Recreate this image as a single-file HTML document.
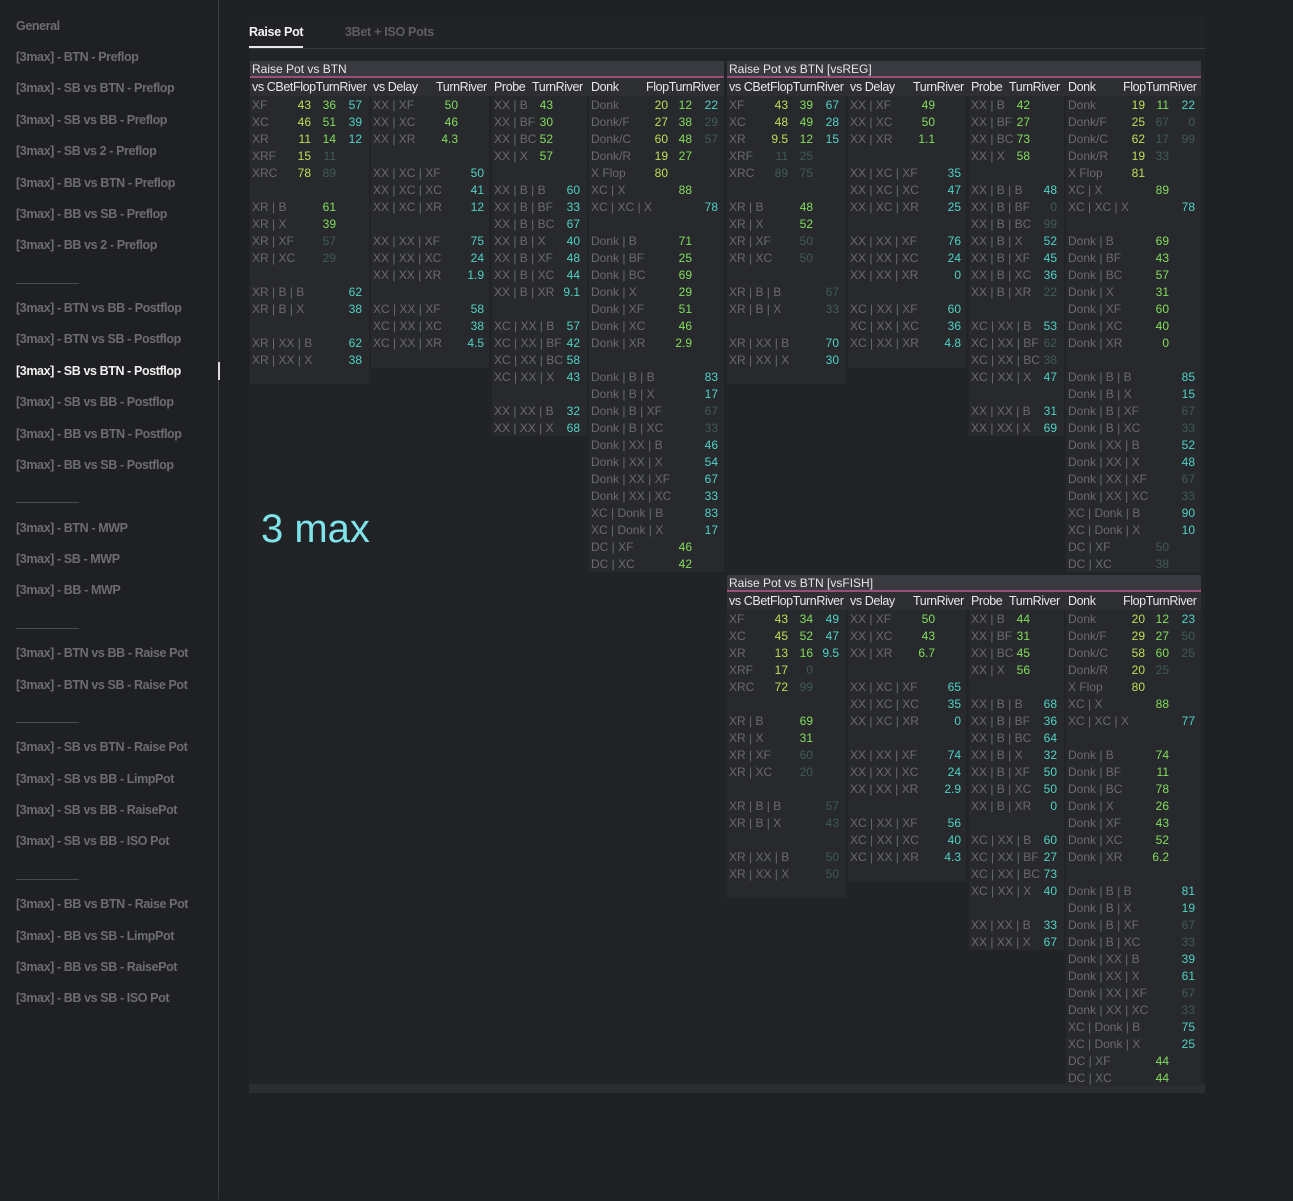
<!DOCTYPE html>
<html><head><meta charset="utf-8"><style>
*{box-sizing:border-box}
body{margin:0;width:1293px;height:1199px;background:#1f2023;font-family:"Liberation Sans",sans-serif;overflow:hidden;position:relative}
.side{position:absolute;left:0;top:2px;width:219px;height:1199px}
.sl{position:absolute;left:218px;top:0;width:1px;height:1199px;background:#3a3b3e}
.side div{position:absolute;left:16px;font-size:12.5px;font-weight:bold;color:#6c6d71;white-space:nowrap;letter-spacing:-0.4px}
.side .act{color:#f0f0f0}
.side .sep{width:63px;height:1px;background:#4a4b4e}
.bar{position:absolute;left:218px;top:362px;width:2px;height:18px;background:#ddd}
.panel{position:absolute;left:249px;top:15px;width:956px;height:1078px;background:#222326}
.tab1{position:absolute;left:249px;top:25px;font-size:12.5px;font-weight:bold;color:#f2f2f2;letter-spacing:-0.3px}
.tab2{position:absolute;left:345px;top:25px;font-size:12.5px;font-weight:bold;color:#5d5e62;letter-spacing:-0.3px}
.tl{position:absolute;left:249px;top:48px;width:956px;height:1px;background:#3a3b3f}
.ul{position:absolute;left:249px;top:46px;width:54px;height:2px;background:#e8e8e8}
.sb{position:absolute;left:249px;top:1084px;width:956px;height:9px;background:#2c2d30}
.ttl{position:absolute;height:17px;background:#3a3b40;border-bottom:2px solid #9a4f78;color:#e6e6e6;font-size:12px;line-height:16px;padding-left:2px}
.hd{position:absolute;height:18px;background:#2e2f33;color:#e8e8e8;font-size:12.5px;line-height:19px;white-space:nowrap;letter-spacing:-0.4px}
.hd span{position:absolute;top:0}
.g{position:absolute;background:#28292d}
.g p{height:17px;margin:0;position:relative;line-height:19px;font-size:12px;white-space:nowrap}
.g i{font-style:normal;color:#6a6b70;position:absolute;left:2px}
.g b{font-weight:normal;position:absolute;top:0}
.f{color:#c3dd58}.t{color:#82dd5c}.v{color:#4fd3c6}
b.d{color:#3e5c52}
.A{width:119px}.A .f{right:58px}.A .t{right:33px}.A .v{right:7px}
.B{width:118px}.B .t{right:31px}.B .v{right:5px}
.C{width:95px}.C .t{right:34px}.C .v{right:7px}
.D{width:135px}.D .f{right:56px}.D .t{right:32px}.D .v{right:6px}
.big{position:absolute;left:261px;top:507px;font-size:40px;color:#7fe3ea}
</style></head><body>
<div class="sl"></div>
<div class="side">
<div style="top:17px">General</div>
<div style="top:48px">[3max] - BTN - Preflop</div>
<div style="top:79px">[3max] - SB vs BTN - Preflop</div>
<div style="top:111px">[3max] - SB vs BB - Preflop</div>
<div style="top:142px">[3max] - SB vs 2 - Preflop</div>
<div style="top:174px">[3max] - BB vs BTN - Preflop</div>
<div style="top:205px">[3max] - BB vs SB - Preflop</div>
<div style="top:236px">[3max] - BB vs 2 - Preflop</div>
<div class="sep" style="top:281px"></div>
<div style="top:299px">[3max] - BTN vs BB - Postflop</div>
<div style="top:330px">[3max] - BTN vs SB - Postflop</div>
<div class="act" style="top:362px">[3max] - SB vs BTN - Postflop</div>
<div style="top:393px">[3max] - SB vs BB - Postflop</div>
<div style="top:425px">[3max] - BB vs BTN - Postflop</div>
<div style="top:456px">[3max] - BB vs SB - Postflop</div>
<div class="sep" style="top:500px"></div>
<div style="top:519px">[3max] - BTN - MWP</div>
<div style="top:550px">[3max] - SB - MWP</div>
<div style="top:581px">[3max] - BB - MWP</div>
<div class="sep" style="top:626px"></div>
<div style="top:644px">[3max] - BTN vs BB - Raise Pot</div>
<div style="top:676px">[3max] - BTN vs SB - Raise Pot</div>
<div class="sep" style="top:720px"></div>
<div style="top:738px">[3max] - SB vs BTN - Raise Pot</div>
<div style="top:770px">[3max] - SB vs BB - LimpPot</div>
<div style="top:801px">[3max] - SB vs BB - RaisePot</div>
<div style="top:832px">[3max] - SB vs BB - ISO Pot</div>
<div class="sep" style="top:877px"></div>
<div style="top:895px">[3max] - BB vs BTN - Raise Pot</div>
<div style="top:927px">[3max] - BB vs SB - LimpPot</div>
<div style="top:958px">[3max] - BB vs SB - RaisePot</div>
<div style="top:989px">[3max] - BB vs SB - ISO Pot</div>
</div>
<div class="bar"></div>
<div class="panel"></div>
<div class="tab1">Raise Pot</div><div class="tab2">3Bet + ISO Pots</div>
<div class="tl"></div><div class="ul"></div>
<div class="sb"></div>
<div class="big">3 max</div>

<!-- Block 1 -->
<div class="ttl" style="left:250px;top:61px;width:474px">Raise Pot vs BTN</div>
<div class="hd" style="left:250px;top:78px;width:474px">
<span style="left:2px">vs CBetFlopTurnRiver</span><span style="left:123px">vs Delay</span><span style="left:186px">TurnRiver</span><span style="left:244px">Probe</span><span style="left:282px">TurnRiver</span><span style="left:341px">Donk</span><span style="left:396px">FlopTurnRiver</span></div>
<div class="g A" style="left:250px;top:96px;height:288px">
<p><i>XF</i><b class="f">43</b><b class="t">36</b><b class="v">57</b></p>
<p><i>XC</i><b class="f">46</b><b class="t">51</b><b class="v">39</b></p>
<p><i>XR</i><b class="f">11</b><b class="t">14</b><b class="v">12</b></p>
<p><i>XRF</i><b class="f">15</b><b class="t d">11</b></p>
<p><i>XRC</i><b class="f">78</b><b class="t d">89</b></p>
<p></p>
<p><i>XR | B</i><b class="t">61</b></p>
<p><i>XR | X</i><b class="t">39</b></p>
<p><i>XR | XF</i><b class="t d">57</b></p>
<p><i>XR | XC</i><b class="t d">29</b></p>
<p></p>
<p><i>XR | B | B</i><b class="v">62</b></p>
<p><i>XR | B | X</i><b class="v">38</b></p>
<p></p>
<p><i>XR | XX | B</i><b class="v">62</b></p>
<p><i>XR | XX | X</i><b class="v">38</b></p>
</div>
<div class="g B" style="left:371px;top:96px;height:272px">
<p><i>XX | XF</i><b class="t">50</b></p>
<p><i>XX | XC</i><b class="t">46</b></p>
<p><i>XX | XR</i><b class="t">4.3</b></p>
<p></p>
<p><i>XX | XC | XF</i><b class="v">50</b></p>
<p><i>XX | XC | XC</i><b class="v">41</b></p>
<p><i>XX | XC | XR</i><b class="v">12</b></p>
<p></p>
<p><i>XX | XX | XF</i><b class="v">75</b></p>
<p><i>XX | XX | XC</i><b class="v">24</b></p>
<p><i>XX | XX | XR</i><b class="v">1.9</b></p>
<p></p>
<p><i>XC | XX | XF</i><b class="v">58</b></p>
<p><i>XC | XX | XC</i><b class="v">38</b></p>
<p><i>XC | XX | XR</i><b class="v">4.5</b></p>
</div>
<div class="g C" style="left:492px;top:96px;height:340px">
<p><i>XX | B</i><b class="t">43</b></p>
<p><i>XX | BF</i><b class="t">30</b></p>
<p><i>XX | BC</i><b class="t">52</b></p>
<p><i>XX | X</i><b class="t">57</b></p>
<p></p>
<p><i>XX | B | B</i><b class="v">60</b></p>
<p><i>XX | B | BF</i><b class="v">33</b></p>
<p><i>XX | B | BC</i><b class="v">67</b></p>
<p><i>XX | B | X</i><b class="v">40</b></p>
<p><i>XX | B | XF</i><b class="v">48</b></p>
<p><i>XX | B | XC</i><b class="v">44</b></p>
<p><i>XX | B | XR</i><b class="v">9.1</b></p>
<p></p>
<p><i>XC | XX | B</i><b class="v">57</b></p>
<p><i>XC | XX | BF</i><b class="v">42</b></p>
<p><i>XC | XX | BC</i><b class="v">58</b></p>
<p><i>XC | XX | X</i><b class="v">43</b></p>
<p></p>
<p><i>XX | XX | B</i><b class="v">32</b></p>
<p><i>XX | XX | X</i><b class="v">68</b></p>
</div>
<div class="g D" style="left:589px;top:96px;height:476px">
<p><i>Donk</i><b class="f">20</b><b class="t">12</b><b class="v">22</b></p>
<p><i>Donk/F</i><b class="f">27</b><b class="t">38</b><b class="v d">29</b></p>
<p><i>Donk/C</i><b class="f">60</b><b class="t">48</b><b class="v d">57</b></p>
<p><i>Donk/R</i><b class="f">19</b><b class="t">27</b></p>
<p><i>X Flop</i><b class="f">80</b></p>
<p><i>XC | X</i><b class="t">88</b></p>
<p><i>XC | XC | X</i><b class="v">78</b></p>
<p></p>
<p><i>Donk | B</i><b class="t">71</b></p>
<p><i>Donk | BF</i><b class="t">25</b></p>
<p><i>Donk | BC</i><b class="t">69</b></p>
<p><i>Donk | X</i><b class="t">29</b></p>
<p><i>Donk | XF</i><b class="t">51</b></p>
<p><i>Donk | XC</i><b class="t">46</b></p>
<p><i>Donk | XR</i><b class="t">2.9</b></p>
<p></p>
<p><i>Donk | B | B</i><b class="v">83</b></p>
<p><i>Donk | B | X</i><b class="v">17</b></p>
<p><i>Donk | B | XF</i><b class="v d">67</b></p>
<p><i>Donk | B | XC</i><b class="v d">33</b></p>
<p><i>Donk | XX | B</i><b class="v">46</b></p>
<p><i>Donk | XX | X</i><b class="v">54</b></p>
<p><i>Donk | XX | XF</i><b class="v">67</b></p>
<p><i>Donk | XX | XC</i><b class="v">33</b></p>
<p><i>XC | Donk | B</i><b class="v">83</b></p>
<p><i>XC | Donk | X</i><b class="v">17</b></p>
<p><i>DC | XF</i><b class="t">46</b></p>
<p><i>DC | XC</i><b class="t">42</b></p>
</div>

<!-- Block 2 -->
<div class="ttl" style="left:727px;top:61px;width:474px">Raise Pot vs BTN [vsREG]</div>
<div class="hd" style="left:727px;top:78px;width:474px">
<span style="left:2px">vs CBetFlopTurnRiver</span><span style="left:123px">vs Delay</span><span style="left:186px">TurnRiver</span><span style="left:244px">Probe</span><span style="left:282px">TurnRiver</span><span style="left:341px">Donk</span><span style="left:396px">FlopTurnRiver</span></div>
<div class="g A" style="left:727px;top:96px;height:288px">
<p><i>XF</i><b class="f">43</b><b class="t">39</b><b class="v">67</b></p>
<p><i>XC</i><b class="f">48</b><b class="t">49</b><b class="v">28</b></p>
<p><i>XR</i><b class="f">9.5</b><b class="t">12</b><b class="v">15</b></p>
<p><i>XRF</i><b class="f d">11</b><b class="t d">25</b></p>
<p><i>XRC</i><b class="f d">89</b><b class="t d">75</b></p>
<p></p>
<p><i>XR | B</i><b class="t">48</b></p>
<p><i>XR | X</i><b class="t">52</b></p>
<p><i>XR | XF</i><b class="t d">50</b></p>
<p><i>XR | XC</i><b class="t d">50</b></p>
<p></p>
<p><i>XR | B | B</i><b class="v d">67</b></p>
<p><i>XR | B | X</i><b class="v d">33</b></p>
<p></p>
<p><i>XR | XX | B</i><b class="v">70</b></p>
<p><i>XR | XX | X</i><b class="v">30</b></p>
</div>
<div class="g B" style="left:848px;top:96px;height:272px">
<p><i>XX | XF</i><b class="t">49</b></p>
<p><i>XX | XC</i><b class="t">50</b></p>
<p><i>XX | XR</i><b class="t">1.1</b></p>
<p></p>
<p><i>XX | XC | XF</i><b class="v">35</b></p>
<p><i>XX | XC | XC</i><b class="v">47</b></p>
<p><i>XX | XC | XR</i><b class="v">25</b></p>
<p></p>
<p><i>XX | XX | XF</i><b class="v">76</b></p>
<p><i>XX | XX | XC</i><b class="v">24</b></p>
<p><i>XX | XX | XR</i><b class="v">0</b></p>
<p></p>
<p><i>XC | XX | XF</i><b class="v">60</b></p>
<p><i>XC | XX | XC</i><b class="v">36</b></p>
<p><i>XC | XX | XR</i><b class="v">4.8</b></p>
</div>
<div class="g C" style="left:969px;top:96px;height:340px">
<p><i>XX | B</i><b class="t">42</b></p>
<p><i>XX | BF</i><b class="t">27</b></p>
<p><i>XX | BC</i><b class="t">73</b></p>
<p><i>XX | X</i><b class="t">58</b></p>
<p></p>
<p><i>XX | B | B</i><b class="v">48</b></p>
<p><i>XX | B | BF</i><b class="v d">0</b></p>
<p><i>XX | B | BC</i><b class="v d">99</b></p>
<p><i>XX | B | X</i><b class="v">52</b></p>
<p><i>XX | B | XF</i><b class="v">45</b></p>
<p><i>XX | B | XC</i><b class="v">36</b></p>
<p><i>XX | B | XR</i><b class="v d">22</b></p>
<p></p>
<p><i>XC | XX | B</i><b class="v">53</b></p>
<p><i>XC | XX | BF</i><b class="v d">62</b></p>
<p><i>XC | XX | BC</i><b class="v d">38</b></p>
<p><i>XC | XX | X</i><b class="v">47</b></p>
<p></p>
<p><i>XX | XX | B</i><b class="v">31</b></p>
<p><i>XX | XX | X</i><b class="v">69</b></p>
</div>
<div class="g D" style="left:1066px;top:96px;height:476px">
<p><i>Donk</i><b class="f">19</b><b class="t">11</b><b class="v">22</b></p>
<p><i>Donk/F</i><b class="f">25</b><b class="t d">67</b><b class="v d">0</b></p>
<p><i>Donk/C</i><b class="f">62</b><b class="t d">17</b><b class="v d">99</b></p>
<p><i>Donk/R</i><b class="f">19</b><b class="t d">33</b></p>
<p><i>X Flop</i><b class="f">81</b></p>
<p><i>XC | X</i><b class="t">89</b></p>
<p><i>XC | XC | X</i><b class="v">78</b></p>
<p></p>
<p><i>Donk | B</i><b class="t">69</b></p>
<p><i>Donk | BF</i><b class="t">43</b></p>
<p><i>Donk | BC</i><b class="t">57</b></p>
<p><i>Donk | X</i><b class="t">31</b></p>
<p><i>Donk | XF</i><b class="t">60</b></p>
<p><i>Donk | XC</i><b class="t">40</b></p>
<p><i>Donk | XR</i><b class="t">0</b></p>
<p></p>
<p><i>Donk | B | B</i><b class="v">85</b></p>
<p><i>Donk | B | X</i><b class="v">15</b></p>
<p><i>Donk | B | XF</i><b class="v d">67</b></p>
<p><i>Donk | B | XC</i><b class="v d">33</b></p>
<p><i>Donk | XX | B</i><b class="v">52</b></p>
<p><i>Donk | XX | X</i><b class="v">48</b></p>
<p><i>Donk | XX | XF</i><b class="v d">67</b></p>
<p><i>Donk | XX | XC</i><b class="v d">33</b></p>
<p><i>XC | Donk | B</i><b class="v">90</b></p>
<p><i>XC | Donk | X</i><b class="v">10</b></p>
<p><i>DC | XF</i><b class="t d">50</b></p>
<p><i>DC | XC</i><b class="t d">38</b></p>
</div>

<!-- Block 3 -->
<div class="ttl" style="left:727px;top:575px;width:474px">Raise Pot vs BTN [vsFISH]</div>
<div class="hd" style="left:727px;top:592px;width:474px">
<span style="left:2px">vs CBetFlopTurnRiver</span><span style="left:123px">vs Delay</span><span style="left:186px">TurnRiver</span><span style="left:244px">Probe</span><span style="left:282px">TurnRiver</span><span style="left:341px">Donk</span><span style="left:396px">FlopTurnRiver</span></div>
<div class="g A" style="left:727px;top:610px;height:288px">
<p><i>XF</i><b class="f">43</b><b class="t">34</b><b class="v">49</b></p>
<p><i>XC</i><b class="f">45</b><b class="t">52</b><b class="v">47</b></p>
<p><i>XR</i><b class="f">13</b><b class="t">16</b><b class="v">9.5</b></p>
<p><i>XRF</i><b class="f">17</b><b class="t d">0</b></p>
<p><i>XRC</i><b class="f">72</b><b class="t d">99</b></p>
<p></p>
<p><i>XR | B</i><b class="t">69</b></p>
<p><i>XR | X</i><b class="t">31</b></p>
<p><i>XR | XF</i><b class="t d">60</b></p>
<p><i>XR | XC</i><b class="t d">20</b></p>
<p></p>
<p><i>XR | B | B</i><b class="v d">57</b></p>
<p><i>XR | B | X</i><b class="v d">43</b></p>
<p></p>
<p><i>XR | XX | B</i><b class="v d">50</b></p>
<p><i>XR | XX | X</i><b class="v d">50</b></p>
</div>
<div class="g B" style="left:848px;top:610px;height:272px">
<p><i>XX | XF</i><b class="t">50</b></p>
<p><i>XX | XC</i><b class="t">43</b></p>
<p><i>XX | XR</i><b class="t">6.7</b></p>
<p></p>
<p><i>XX | XC | XF</i><b class="v">65</b></p>
<p><i>XX | XC | XC</i><b class="v">35</b></p>
<p><i>XX | XC | XR</i><b class="v">0</b></p>
<p></p>
<p><i>XX | XX | XF</i><b class="v">74</b></p>
<p><i>XX | XX | XC</i><b class="v">24</b></p>
<p><i>XX | XX | XR</i><b class="v">2.9</b></p>
<p></p>
<p><i>XC | XX | XF</i><b class="v">56</b></p>
<p><i>XC | XX | XC</i><b class="v">40</b></p>
<p><i>XC | XX | XR</i><b class="v">4.3</b></p>
</div>
<div class="g C" style="left:969px;top:610px;height:340px">
<p><i>XX | B</i><b class="t">44</b></p>
<p><i>XX | BF</i><b class="t">31</b></p>
<p><i>XX | BC</i><b class="t">45</b></p>
<p><i>XX | X</i><b class="t">56</b></p>
<p></p>
<p><i>XX | B | B</i><b class="v">68</b></p>
<p><i>XX | B | BF</i><b class="v">36</b></p>
<p><i>XX | B | BC</i><b class="v">64</b></p>
<p><i>XX | B | X</i><b class="v">32</b></p>
<p><i>XX | B | XF</i><b class="v">50</b></p>
<p><i>XX | B | XC</i><b class="v">50</b></p>
<p><i>XX | B | XR</i><b class="v">0</b></p>
<p></p>
<p><i>XC | XX | B</i><b class="v">60</b></p>
<p><i>XC | XX | BF</i><b class="v">27</b></p>
<p><i>XC | XX | BC</i><b class="v">73</b></p>
<p><i>XC | XX | X</i><b class="v">40</b></p>
<p></p>
<p><i>XX | XX | B</i><b class="v">33</b></p>
<p><i>XX | XX | X</i><b class="v">67</b></p>
</div>
<div class="g D" style="left:1066px;top:610px;height:476px">
<p><i>Donk</i><b class="f">20</b><b class="t">12</b><b class="v">23</b></p>
<p><i>Donk/F</i><b class="f">29</b><b class="t">27</b><b class="v d">50</b></p>
<p><i>Donk/C</i><b class="f">58</b><b class="t">60</b><b class="v d">25</b></p>
<p><i>Donk/R</i><b class="f">20</b><b class="t d">25</b></p>
<p><i>X Flop</i><b class="f">80</b></p>
<p><i>XC | X</i><b class="t">88</b></p>
<p><i>XC | XC | X</i><b class="v">77</b></p>
<p></p>
<p><i>Donk | B</i><b class="t">74</b></p>
<p><i>Donk | BF</i><b class="t">11</b></p>
<p><i>Donk | BC</i><b class="t">78</b></p>
<p><i>Donk | X</i><b class="t">26</b></p>
<p><i>Donk | XF</i><b class="t">43</b></p>
<p><i>Donk | XC</i><b class="t">52</b></p>
<p><i>Donk | XR</i><b class="t">6.2</b></p>
<p></p>
<p><i>Donk | B | B</i><b class="v">81</b></p>
<p><i>Donk | B | X</i><b class="v">19</b></p>
<p><i>Donk | B | XF</i><b class="v d">67</b></p>
<p><i>Donk | B | XC</i><b class="v d">33</b></p>
<p><i>Donk | XX | B</i><b class="v">39</b></p>
<p><i>Donk | XX | X</i><b class="v">61</b></p>
<p><i>Donk | XX | XF</i><b class="v d">67</b></p>
<p><i>Donk | XX | XC</i><b class="v d">33</b></p>
<p><i>XC | Donk | B</i><b class="v">75</b></p>
<p><i>XC | Donk | X</i><b class="v">25</b></p>
<p><i>DC | XF</i><b class="t">44</b></p>
<p><i>DC | XC</i><b class="t">44</b></p>
</div>
</body></html>
